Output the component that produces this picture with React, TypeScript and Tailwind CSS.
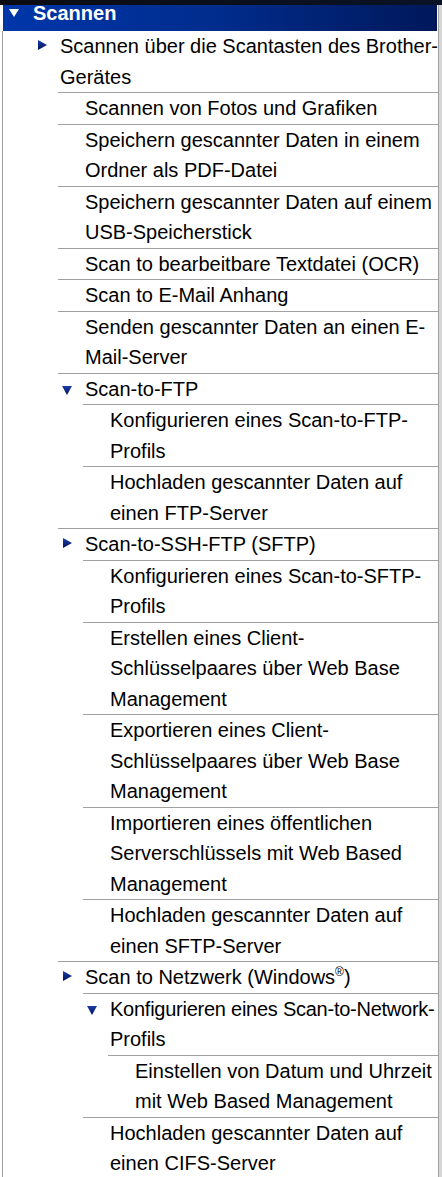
import React from 'react';

type Row = {
    level: number;
    arrow?: 'right' | 'down';
    lines: React.ReactNode[];
};

const rows: Row[] = [
    { level: 1, arrow: 'right', lines: ['Scannen über die Scantasten des Brother-', 'Gerätes'] },
    { level: 2, lines: ['Scannen von Fotos und Grafiken'] },
    { level: 2, lines: ['Speichern gescannter Daten in einem', 'Ordner als PDF-Datei'] },
    { level: 2, lines: ['Speichern gescannter Daten auf einem', 'USB-Speicherstick'] },
    { level: 2, lines: ['Scan to bearbeitbare Textdatei (OCR)'] },
    { level: 2, lines: ['Scan to E-Mail Anhang'] },
    { level: 2, lines: ['Senden gescannter Daten an einen E-', 'Mail-Server'] },
    { level: 2, arrow: 'down', lines: ['Scan-to-FTP'] },
    { level: 3, lines: ['Konfigurieren eines Scan-to-FTP-', 'Profils'] },
    { level: 3, lines: ['Hochladen gescannter Daten auf', 'einen FTP-Server'] },
    { level: 2, arrow: 'right', lines: ['Scan-to-SSH-FTP (SFTP)'] },
    { level: 3, lines: ['Konfigurieren eines Scan-to-SFTP-', 'Profils'] },
    { level: 3, lines: ['Erstellen eines Client-', 'Schlüsselpaares über Web Base', 'Management'] },
    { level: 3, lines: ['Exportieren eines Client-', 'Schlüsselpaares über Web Base', 'Management'] },
    { level: 3, lines: ['Importieren eines öffentlichen', 'Serverschlüssels mit Web Based', 'Management'] },
    { level: 3, lines: ['Hochladen gescannter Daten auf', 'einen SFTP-Server'] },
    {
        level: 2,
        arrow: 'right',
        lines: [
            <>
                Scan to Netzwerk (Windows<span className="text-[12px] leading-none align-super">®</span>)
            </>,
        ],
    },
    {
        level: 3,
        arrow: 'down',
        lines: [<span className="tracking-[-0.25px]">Konfigurieren eines Scan-to-Network-</span>, 'Profils'],
    },
    { level: 4, lines: ['Einstellen von Datum und Uhrzeit', 'mit Web Based Management'] },
    { level: 3, lines: ['Hochladen gescannter Daten auf', 'einen CIFS-Server'] },
];

// left margin of each row, by tree depth
const indent: Record<number, string> = {
    1: 'ml-[30px]',
    2: 'ml-[55px]',
    3: 'ml-[80px]',
    4: 'ml-[105px]',
};

function ArrowRight() {
    return (
        <svg width="9" height="10" viewBox="0 0 9 10" className="mt-[9px] ml-[5px]">
            <defs>
                <linearGradient id="ar" x1="0" y1="0" x2="0" y2="1">
                    <stop offset="0" stopColor="#1d3ea8" />
                    <stop offset="1" stopColor="#00125e" />
                </linearGradient>
            </defs>
            <polygon points="0,0 9,5 0,10" fill="url(#ar)" />
        </svg>
    );
}

function ArrowDown() {
    return (
        <svg width="10" height="9" viewBox="0 0 10 9" className="mt-[12px] ml-[4px]">
            <defs>
                <linearGradient id="ad" x1="0" y1="0" x2="0" y2="1">
                    <stop offset="0" stopColor="#1d3ea8" />
                    <stop offset="1" stopColor="#00125e" />
                </linearGradient>
            </defs>
            <polygon points="0,0 10,0 5,9" fill="url(#ad)" />
        </svg>
    );
}

function TreeRow({ row, first }: { row: Row; first: boolean }) {
    return (
        <div className={`${indent[row.level]} flex ${first ? '' : 'border-t border-[#a0a0a0]'}`}>
            <div className="w-[27px] shrink-0">
                {row.arrow === 'right' && <ArrowRight />}
                {row.arrow === 'down' && <ArrowDown />}
            </div>
            <div className="whitespace-nowrap text-[20px] leading-[30.5px] text-black">
                {row.lines.map((line, i) => (
                    <div key={i}>{line}</div>
                ))}
            </div>
        </div>
    );
}

export default function App() {
    return (
        <div className="w-[442px] h-[1177px] overflow-hidden bg-white flex flex-col font-['Liberation_Sans',Arial,sans-serif]">
            <div className="h-[5px] shrink-0 bg-gradient-to-r from-[#0b0c12] to-[#0a1226]" />
            <div className="flex flex-1 min-h-0">
                <div className="w-[438px] flex flex-col">
                    <div className="ml-[3px] w-[434px] h-[26px] shrink-0 overflow-hidden flex bg-gradient-to-r from-[#0036aa] via-[#002c8c] to-[#00185a]">
                        <svg width="10" height="8" viewBox="0 0 10 8" className="mt-[4px] ml-[6px]">
                            <polygon points="0,0 10,0 5,8" fill="#ffffff" />
                        </svg>
                        <span className="ml-[14px] -mt-[2px] text-[20px] leading-[20px] font-bold text-white">Scannen</span>
                    </div>
                    <div className="ml-[2px] flex-1 border-l border-[#a0a0a0] overflow-hidden">
                        {rows.map((row, i) => (
                            <TreeRow key={i} row={row} first={i === 0} />
                        ))}
                    </div>
                </div>
                <div className="w-[4px] border-l border-[#a0a0a0] bg-[#d6d6d6]" />
            </div>
        </div>
    );
}
